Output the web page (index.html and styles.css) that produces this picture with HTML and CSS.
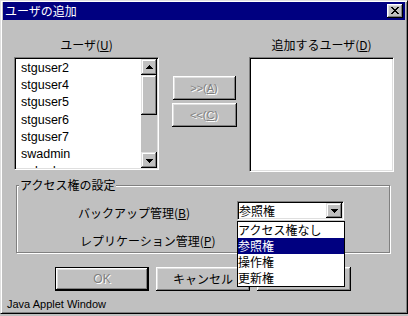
FILE: index.html
```html
<!DOCTYPE html>
<html lang="ja">
<head>
<meta charset="utf-8">
<title>ユーザの追加</title>
<link rel="stylesheet" href="styles.css">
</head>
<body>
<div class="window">
  <div class="titlebar">
    <span class="title">ユーザの追加</span>
    <span class="close raised-btn">
      <svg width="8" height="7" viewBox="0 0 8 7"><path d="M0 0h2v1H0zM6 0h2v1H6zM1 1h2v1H1zM5 1h2v1H5zM2 2h4v1H2zM3 3h2v1H3zM2 4h4v1H2zM1 5h2v1H1zM5 5h2v1H5zM0 6h2v1H0zM6 6h2v1H6z" fill="#000"/></svg>
    </span>
  </div>
  <div class="content">
    <div class="lists">
      <div class="col">
        <div class="col-label">ユーザ(<u>U</u>)</div>
        <div class="listbox left">
          <ul class="items">
            <li>stguser2</li>
            <li>stguser4</li>
            <li>stguser5</li>
            <li>stguser6</li>
            <li>stguser7</li>
            <li>swadmin</li>
            <li>nobody</li>
          </ul>
          <div class="scrollbar">
            <div class="sb-btn">
              <svg width="7" height="4" viewBox="0 0 7 4"><path d="M3 0h1v1H3zM2 1h3v1H2zM1 2h5v1H1zM0 3h7v1H0z" fill="#000"/></svg>
            </div>
            <div class="sb-thumb"></div>
            <div class="sb-btn sb-down">
              <svg width="7" height="4" viewBox="0 0 7 4"><path d="M0 0h7v1H0zM1 1h5v1H1zM2 2h3v1H2zM3 3h1v1H3z" fill="#000"/></svg>
            </div>
          </div>
        </div>
      </div>
      <div class="mid">
        <div class="btn disabled w1">&gt;&gt;(<u>A</u>)</div>
        <div class="btn disabled w2">&lt;&lt;(<u>C</u>)</div>
      </div>
      <div class="col">
        <div class="col-label">追加するユーザ(<u>D</u>)</div>
        <div class="listbox right"></div>
      </div>
    </div>

    <div class="group">
      <div class="group-title">アクセス権の設定</div>
      <div class="row r1">
        <span class="lbl">バックアップ管理(<u>B</u>)</span>
        <div class="combo">
          <span class="combo-text">参照権</span>
          <span class="combo-btn">
            <svg width="7" height="4" viewBox="0 0 7 4"><path d="M0 0h7v1H0zM1 1h5v1H1zM2 2h3v1H2zM3 3h1v1H3z" fill="#000"/></svg>
          </span>
          <ul class="dropdown">
            <li>アクセス権なし</li>
            <li class="sel">参照権</li>
            <li>操作権</li>
            <li>更新権</li>
          </ul>
        </div>
      </div>
      <div class="row r2">
        <span class="lbl">レプリケーション管理(<u>P</u>)</span>
        <div class="combo">
          <span class="combo-text"></span>
          <span class="combo-btn">
            <svg width="7" height="4" viewBox="0 0 7 4"><path d="M0 0h7v1H0zM1 1h5v1H1zM2 2h3v1H2zM3 3h1v1H3z" fill="#000"/></svg>
          </span>
        </div>
      </div>
    </div>

    <div class="buttons">
      <div class="pbtn default disabled">OK</div>
      <div class="pbtn">キャンセル</div>
      <div class="pbtn"></div>
    </div>

    <div class="status">Java Applet Window</div>
  </div>
</div>
</body>
</html>
```
FILE: styles.css
```css
* {
  box-sizing: border-box;
  margin: 0;
  padding: 0;
}

html, body {
  width: 408px;
  height: 316px;
  overflow: hidden;
}

body {
  background: #c0c0c0;
  font-family: "Noto Sans CJK JP", sans-serif;
  font-size: 12px;
  color: #000;
}

u {
  text-decoration: underline;
  text-underline-offset: 1px;
}

.window {
  width: 408px;
  height: 314px;
  border: 1px solid;
  border-color: #dfdfdf #000 #000 #dfdfdf;
  box-shadow: inset 1px 1px #fff, inset -1px -1px #808080;
  padding: 1px 2px 2px 2px;
  display: flex;
  flex-direction: column;
}

.titlebar {
  height: 18px;
  background: #000080;
  color: #fff;
  display: flex;
  align-items: center;
  padding-left: 2px;
  line-height: 18px;
}

.title {
  font-size: 12px;
}

.raised-btn {
  background: #c0c0c0;
  box-shadow: inset -1px -1px #000, inset 1px 1px #fff, inset -2px -2px #808080, inset 2px 2px #dfdfdf;
}

.close {
  width: 16px;
  height: 14px;
  margin-left: auto;
  margin-right: 2px;
  display: flex;
  align-items: center;
  justify-content: center;
  padding-bottom: 1px;
}

.content {
  flex: 1;
  display: flex;
  flex-direction: column;
  padding-top: 17px;
}

.lists {
  display: flex;
  align-items: flex-start;
  padding-left: 11px;
}

.col {
  width: 145px;
  display: flex;
  flex-direction: column;
}

.col-label {
  text-align: center;
  line-height: 16px;
  height: 16px;
  margin-bottom: 4px;
}

.listbox {
  background: #fff;
  border: 1px solid;
  border-color: #808080 #fff #fff #808080;
  box-shadow: inset 1px 1px #000, inset -1px -1px #dfdfdf;
  padding: 1px;
}

.listbox.left {
  height: 113px;
  display: flex;
}

.listbox.right {
  height: 115px;
}

.items {
  flex: 1;
  overflow: hidden;
  list-style: none;
  padding-left: 5px;
  padding-top: 1px;
  font-family: "Liberation Sans", Arial, sans-serif;
  font-size: 12.5px;
  line-height: 17.2px;
}

.scrollbar {
  width: 16px;
  display: flex;
  flex-direction: column;
  background: #c0c0c0;
}

.sb-btn,
.sb-thumb,
.combo-btn {
  background: #c0c0c0;
  box-shadow: inset -1px -1px #000, inset 1px 1px #dfdfdf, inset -2px -2px #808080, inset 2px 2px #fff;
}

.sb-btn {
  height: 16px;
  display: flex;
  align-items: center;
  justify-content: center;
  padding-bottom: 1px;
}

.sb-thumb {
  height: 40px;
}

.sb-down {
  margin-top: auto;
  padding-bottom: 0;
  padding-top: 1px;
}

.mid {
  width: 90px;
  display: flex;
  flex-direction: column;
  align-items: center;
  gap: 3px;
  padding-top: 39px;
}

.btn {
  height: 24px;
  display: flex;
  align-items: center;
  justify-content: center;
  font-family: "Liberation Sans", Arial, sans-serif;
  font-size: 11px;
  background: #c0c0c0;
  box-shadow: inset -1px -1px #000, inset 1px 1px #fff, inset -2px -2px #808080, inset 2px 2px #dfdfdf;
}

.w1 {
  width: 63px;
}

.w2 {
  width: 65px;
}

.disabled {
  color: #808080;
  text-shadow: 1px 1px #fff;
}

.group {
  margin: 13px 0 0 13px;
  width: 374px;
  height: 68px;
  border: 1px solid #808080;
  box-shadow: inset 1px 1px #fff, 1px 1px #fff;
  display: flex;
  flex-direction: column;
}

.group-title {
  align-self: flex-start;
  margin-top: -9px;
  margin-left: 2px;
  padding: 0 1px;
  line-height: 16px;
  height: 16px;
  background: #c0c0c0;
}

.row {
  display: grid;
  grid-template-columns: 159px 107px;
  align-items: start;
  padding-left: 61px;
}

.r1 {
  margin-top: 8px;
}

.r2 {
  margin-top: 8px;
}

.lbl {
  line-height: 16px;
  margin-top: 4px;
  white-space: nowrap;
}

.r2 .lbl {
  padding-left: 2px;
}

.combo {
  position: relative;
  width: 107px;
  height: 19px;
  background: #fff;
  border: 1px solid;
  border-color: #808080 #fff #fff #808080;
  box-shadow: inset 1px 1px #000, inset -1px -1px #dfdfdf;
  padding: 1px;
  display: flex;
}

.combo-text {
  flex: 1;
  line-height: 15px;
}

.combo-btn {
  width: 16px;
  height: 15px;
  display: flex;
  align-items: center;
  justify-content: center;
  padding-top: 1px;
}

.dropdown {
  position: absolute;
  left: -1px;
  top: 19px;
  width: 108px;
  border: 1px solid #000;
  background: #fff;
  list-style: none;
  z-index: 5;
}

.dropdown li {
  height: 16px;
  line-height: 16px;
  white-space: nowrap;
}

.dropdown li.sel {
  background: #000080;
  color: #fff;
}

.buttons {
  display: flex;
  gap: 7px;
  padding-left: 52px;
  margin-top: 14px;
}

.pbtn {
  width: 94px;
  height: 24px;
  display: flex;
  align-items: center;
  justify-content: center;
  line-height: 16px;
  background: #c0c0c0;
  box-shadow: inset -1px -1px #000, inset 1px 1px #fff, inset -2px -2px #808080, inset 2px 2px #dfdfdf;
}

.pbtn.default {
  border: 1px solid #000;
  font-family: "Liberation Sans", Arial, sans-serif;
}

.status {
  margin-top: 6px;
  padding-left: 4px;
  font-family: "Liberation Sans", Arial, sans-serif;
  font-size: 11px;
  line-height: 14px;
}
```
